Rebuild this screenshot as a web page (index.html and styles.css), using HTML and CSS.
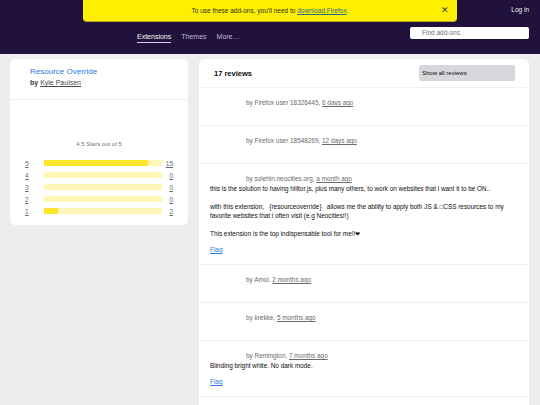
FILE: index.html
```html
<!DOCTYPE html>
<html>
<head>
<meta charset="utf-8">
<link rel="stylesheet" href="styles.css">
</head>
<body>
<header class="site-header">
  <div class="notice">
    <span class="notice-text">To use these add-ons, you'll need to <a href="#">download Firefox</a>.</span>
    <span class="notice-close">&#x2715;</span>
  </div>
  <div class="top-row"><a class="login" href="#">Log in</a></div>
  <div class="nav-row">
    <nav class="nav">
      <a class="nav-link active" href="#">Extensions</a>
      <a class="nav-link" href="#">Themes</a>
      <a class="nav-link" href="#">More…</a>
    </nav>
    <div class="search">Find add-ons</div>
  </div>
</header>
<main class="main">
  <section class="card addon-card">
    <div class="addon-head">
      <a class="addon-name" href="#">Resource Override</a>
      <div class="addon-author"><b>by</b> <a href="#">Kyle Paulsen</a></div>
    </div>
    <div class="ratings">
      <div class="stars-text">4.5 Stars out of 5</div>
      <div class="bars">
        <div class="bar-row"><a class="bar-num" href="#">5</a><div class="bar-track"><div class="bar-fill" style="width:88%"></div></div><a class="bar-count" href="#">15</a></div>
        <div class="bar-row"><a class="bar-num" href="#">4</a><div class="bar-track"><div class="bar-fill" style="width:0%"></div></div><a class="bar-count" href="#">0</a></div>
        <div class="bar-row"><a class="bar-num" href="#">3</a><div class="bar-track"><div class="bar-fill" style="width:0%"></div></div><a class="bar-count" href="#">0</a></div>
        <div class="bar-row"><a class="bar-num" href="#">2</a><div class="bar-track"><div class="bar-fill" style="width:0%"></div></div><a class="bar-count" href="#">0</a></div>
        <div class="bar-row"><a class="bar-num" href="#">1</a><div class="bar-track"><div class="bar-fill" style="width:12%"></div></div><a class="bar-count" href="#">2</a></div>
      </div>
    </div>
  </section>
  <section class="card reviews-card">
    <div class="reviews-head">
      <h2 class="reviews-title">17 reviews</h2>
      <div class="show-all">Show all reviews</div>
    </div>
    <ul class="review-list">
      <li class="review empty"><div class="byline">by Firefox user 18326445, <a href="#">6 days ago</a></div></li>
      <li class="review empty"><div class="byline">by Firefox user 18548269, <a href="#">12 days ago</a></div></li>
      <li class="review">
        <div class="byline">by solehin.neocities.org, <a href="#">a month ago</a></div>
        <div class="review-body">this is the solution to having hilitor.js, plus many others, to work on websites that i want it to be ON..<br><br>with this extension, &nbsp;&nbsp;{resourceoverride} &nbsp;&nbsp;allows me the ability to apply both JS &amp; &#9633;CSS resources to my favorite websites that i often visit (e.g Neocities!!)<br><br>This extension is the top indispensable tool for me!!&#10084;</div>
        <a class="flag" href="#">Flag</a>
      </li>
      <li class="review empty"><div class="byline">by Amol, <a href="#">2 months ago</a></div></li>
      <li class="review empty"><div class="byline">by krekke, <a href="#">5 months ago</a></div></li>
      <li class="review">
        <div class="byline">by Remington, <a href="#">7 months ago</a></div>
        <div class="review-body">Blinding bright white. No dark mode.</div>
        <a class="flag" href="#">Flag</a>
      </li>
    </ul>
  </section>
</main>
</body>
</html>
```
FILE: styles.css
```css
* { box-sizing: border-box; }
html, body { margin: 0; padding: 0; }
body {
  background: #ededf0;
  font-family: "Liberation Sans", Arial, sans-serif;
  color: #0c0c0d;
  width: 540px;
  height: 405px;
  overflow: hidden;
}
a { color: inherit; }

.site-header {
  position: relative;
  background: #20123a;
  height: 54px;
  padding: 0 11px 0 137px;
}
.notice {
  position: absolute;
  left: 83px;
  top: 0;
  width: 374px;
  height: 22px;
  background: #fff000;
  border-bottom: 1px solid #b5ab2a;
  border-radius: 0 0 4px 4px;
  display: flex;
  align-items: center;
  justify-content: center;
  font-size: 6.5px;
  color: #2b2a1e;
}
.notice a { color: #2d6a8a; }
.notice-close {
  position: absolute;
  right: 8px;
  top: 5px;
  font-size: 9px;
  color: #3a3a2a;
}
.top-row {
  height: 22px;
  display: flex;
  justify-content: flex-end;
  align-items: center;
  padding-bottom: 4px;
}
.login {
  color: #f3f1f7;
  text-decoration: none;
  font-size: 6.5px;
}
.nav-row {
  display: flex;
  justify-content: space-between;
  align-items: flex-start;
  margin-top: 5px;
}
.nav {
  display: flex;
  gap: 10px;
  padding-top: 5px;
}
.nav-link {
  color: #bfb9cf;
  text-decoration: none;
  font-size: 7px;
  line-height: 9px;
  padding-bottom: 1px;
}
.nav-link.active {
  color: #f9f9fa;
  border-bottom: 1px solid #d8d4e2;
}
.search {
  width: 119px;
  height: 12px;
  background: #ffffff;
  border-radius: 2px;
  font-size: 6.5px;
  line-height: 12px;
  color: #737373;
  padding-left: 12px;
}

.main {
  display: flex;
  align-items: flex-start;
  gap: 11px;
  padding: 5px 11px 0 10px;
}
.card {
  background: #ffffff;
  border-radius: 5px;
}
.addon-card {
  width: 178px;
  flex: none;
  padding-bottom: 8px;
}
.addon-head {
  padding: 7px 20px 0;
  height: 41px;
  border-bottom: 1px solid #f0f0f4;
}
.addon-name {
  display: block;
  color: #2a7ae2;
  text-decoration: none;
  font-size: 8px;
  line-height: 11px;
}
.addon-author {
  font-size: 7px;
  line-height: 11px;
  color: #3a3a3e;
}
.addon-author a { color: #4a4a4f; }
.ratings {
  padding: 40px 15px 0;
}
.stars-text {
  text-align: center;
  font-size: 6px;
  line-height: 9px;
  color: #737373;
  margin-bottom: 8px;
}
.bar-row {
  display: flex;
  align-items: center;
  height: 12px;
}
.bar-num {
  width: 19px;
  font-size: 6.5px;
  color: #6a6a6a;
}
.bar-track {
  width: 118px;
  height: 6px;
  background: #fff6b8;
}
.bar-fill {
  height: 100%;
  background: #ffe62a;
}
.bar-count {
  flex: 1;
  text-align: right;
  font-size: 6.5px;
  color: #6a6a6a;
}

.reviews-card {
  flex: 1;
  min-height: 360px;
}
.reviews-head {
  display: flex;
  align-items: center;
  justify-content: space-between;
  height: 29px;
  padding: 0 14px 0 15px;
  border-bottom: 1px solid #f0f0f4;
}
.reviews-title {
  margin: 0;
  font-size: 7.5px;
  font-weight: 600;
}
.show-all {
  width: 96px;
  height: 16px;
  background: #d7d7db;
  border-radius: 2px;
  font-size: 6px;
  line-height: 16px;
  padding-left: 3px;
  color: #0c0c0d;
}
.review-list {
  list-style: none;
  margin: 0;
  padding: 0;
}
.review {
  padding: 10px 11px 10px;
  border-bottom: 1px solid #ededf0;
}
.review.empty { padding-bottom: 18px; }
.byline {
  margin-left: 36px;
  font-size: 6.4px;
  line-height: 9px;
  color: #6a6a6a;
}
.review-body {
  font-size: 6.4px;
  line-height: 9px;
  color: #0c0c0d;
  margin-top: 1px;
}
.flag {
  display: block;
  margin-top: 7px;
  font-size: 6.4px;
  line-height: 9px;
  color: #2a7ae2;
  width: max-content;
}
```
